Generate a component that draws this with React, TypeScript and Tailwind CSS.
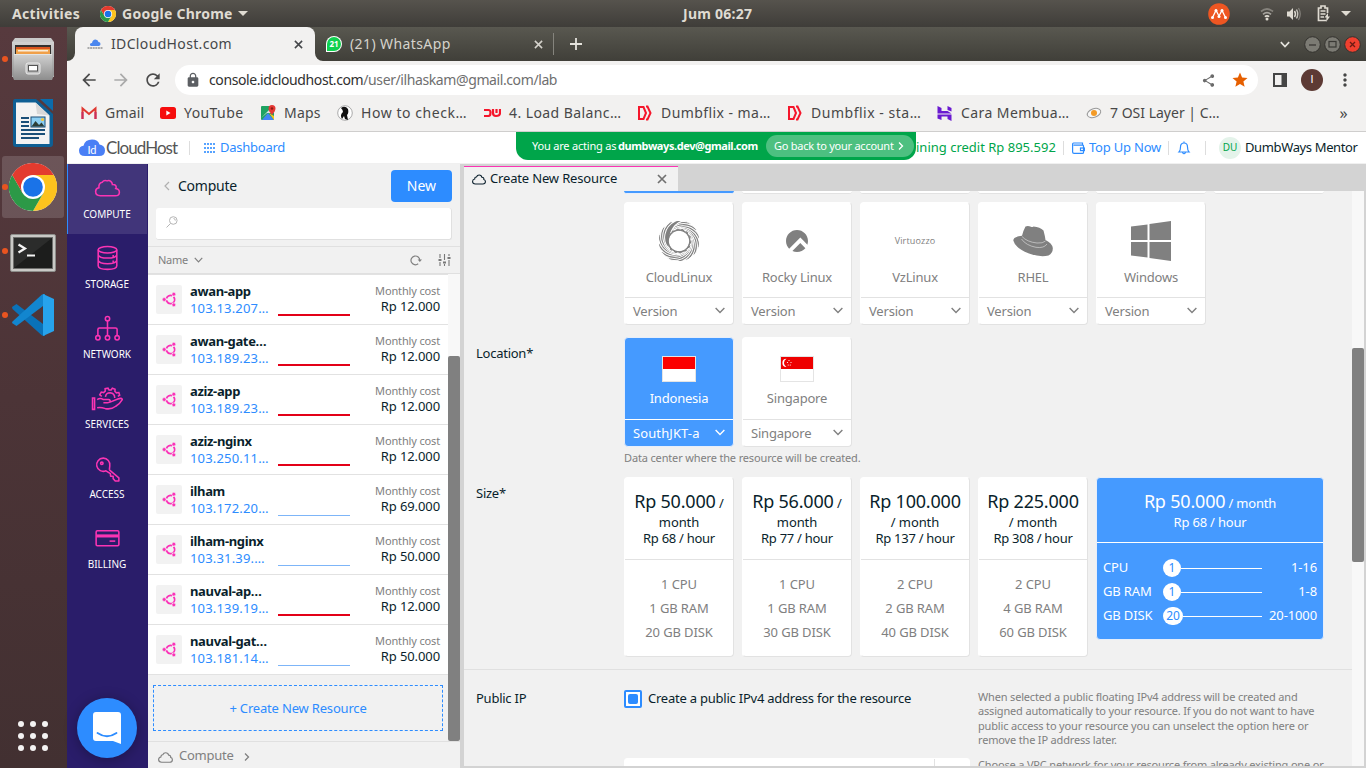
import React from "react";
import { SiRockylinux } from "react-icons/si";
import {
  MdArrowBack,
  MdArrowForward,
  MdRefresh,
  MdLock,
  MdShare,
  MdStar,
  MdMoreVert,
} from "react-icons/md";

function ChromeLogo({ size }: { size: number }) {
  return (
    <svg width={size} height={size} viewBox="0 0 48 48" className="shrink-0">
      <circle cx="24" cy="24" r="24" fill="#fff" />
      <path d="M24 24 L3.2 12 A24 24 0 0 1 44.8 12 Z" fill="#e33b2e" />
      <path d="M24 12 H44.8 A24 24 0 0 1 24 48 L34.4 30 Z" fill="#fcc31e" />
      <path d="M3.2 12 A24 24 0 0 0 24 48 L34.4 30 H24 L13.6 30 Z" fill="#2c9947" />
      <path d="M3.2 12 L13.6 30 L24 24 V12 Z" fill="#e33b2e" />
      <path d="M3.2 12 L13.6 30 L10 24 Z" fill="#2c9947" />
      <circle cx="24" cy="24" r="12" fill="#fff" />
      <circle cx="24" cy="24" r="9.8" fill="#1a73e8" />
    </svg>
  );
}

const cloudPath =
  "M6 19.5 C2.8 19.5 1 17.5 1 15.2 C1 12.8 2.8 11.3 4.8 11 C4.6 8.5 6 7 7.8 7.3 C8.8 5 10.6 4 12.400 4 C15 4 16.9 5.6 17.3 7.9 C20 7.8 21.2 9.800 20.6 11.6 C22.4 12 23.5 13.4 23.5 15.3 C23.5 17.6 21.8 19.5 19 19.5 Z";

function Cloud({ className }: { className: string }) {
  return (
    <svg viewBox="0 3 24.5 17.5" fill="none" stroke="currentColor" strokeWidth="1.9" strokeLinejoin="round" className={className}>
      <path d={cloudPath} />
    </svg>
  );
}

function Chevron({ className }: { className: string }) {
  return (
    <svg viewBox="0 0 12 8" fill="none" stroke="currentColor" strokeWidth="1.6" className={className}>
      <path d="M1 1.2 L6 6.4 L11 1.2" />
    </svg>
  );
}

function FilesIcon() {
  return (
    <svg width="42" height="44" viewBox="0 0 42 44">
      <defs>
        <linearGradient id="cab" x1="0" y1="0" x2="0" y2="1">
          <stop offset="0" stopColor="#d2d2d2" />
          <stop offset="1" stopColor="#8d8d8d" />
        </linearGradient>
      </defs>
      <path d="M3 1 H39 L42 5 V40 H0 V5 Z" fill="#c9c9c9" />
      <path d="M0 5 H42 V38 L40 43 H2 L0 38 Z" fill="url(#cab)" />
      <rect x="3" y="8" width="36" height="11" fill="#33302e" />
      <rect x="4" y="10" width="34" height="4" fill="#d9541e" />
      <rect x="4" y="12" width="34" height="6" rx="1" fill="#f0a04a" />
      <rect x="6" y="13" width="30" height="1.5" fill="#f9ecd9" />
      <rect x="2" y="17" width="38" height="26" fill="url(#cab)" />
      <rect x="2" y="17" width="38" height="1" fill="#e4e4e4" />
      <rect x="14" y="26" width="14" height="11" rx="2" fill="#bdbdbd" stroke="#ececec" />
      <rect x="16.500" y="28.500" width="9" height="5.500" fill="#fff" stroke="#555" />
    </svg>
  );
}

function WriterIcon() {
  return (
    <svg width="42" height="48" viewBox="0 0 42 48">
      <path d="M3 0 H24 L41 15 V45 Q41 48 38 48 H4 Q1 48 1 45 V3 Q1 0 3 0 Z" fill="#0e5f94" />
      <path d="M28 0 H41 V12 Z" fill="#0b6cab" />
      <path d="M4 3.500 H23.500 L37.500 16.500 V45 H4 Z" fill="#f3f3f3" />
      <path d="M23.500 3.500 L37.500 16.500 L25 15 Z" fill="#d8d8d8" />
      <g stroke="#1a4f78" strokeWidth="1.8">
        <path d="M9 19 H17 M9 23 H17 M9 27 H17 M9 31 H33 M9 35 H33 M9 39 H27" />
      </g>
      <rect x="19" y="18" width="14" height="10" fill="#8ccff3" stroke="#1a4f78" />
      <path d="M19.500 27.500 L23.500 22 L27 26 L29.500 23.500 L32.500 27.500 Z" fill="#2d3f38" />
      <circle cx="30.500" cy="20.500" r="1.600" fill="#f3c53b" />
    </svg>
  );
}

function TerminalIcon() {
  return (
    <svg width="46" height="38" viewBox="0 0 46 38" className="mt-1">
      <rect x="0.500" y="0.500" width="45" height="37" rx="1.500" fill="#c9c9c6" stroke="#8d8d8a" />
      <rect x="3.500" y="3.500" width="39" height="31" fill="#2b2c2b" stroke="#6e6e6c" />
      <path d="M4 34 L42 4 V34 Z" fill="#1c1d1c" />
      <path d="M8.500 10.500 L15 14.500 L8.500 18.500" fill="none" stroke="#f4f4f4" strokeWidth="2.200" />
      <path d="M17 21.500 H25" stroke="#f4f4f4" strokeWidth="2" />
    </svg>
  );
}

function CodeIcon() {
  return (
    <svg width="42" height="42" viewBox="0 0 42 42">
      <path d="M0 13 L4.500 10 L33 31.500 V42 L30 41.500 L0.500 15 Z" fill="#0a72b9" />
      <path d="M0.500 27.500 L30 0.500 L33 0 V10.500 L4.500 32 L0 29 Z" fill="#1286cf" />
      <path d="M31 0 L42 5 V37 L31 42 Z" fill="#27a3ec" />
    </svg>
  );
}

function DockSlot({ children, dot, active }: { children?: React.ReactNode; dot?: boolean; active?: boolean }) {
  return (
    <div className="relative flex h-16 w-full items-center justify-center pr-[2px]">
      {active && <div className="absolute left-[2px] top-[1px] h-[62px] w-[62px] rounded-[3px] bg-white/15" />}
      {dot && <div className="absolute left-[2px] top-[29px] h-[6px] w-[6px] rounded-full bg-[#e95420]" />}
      <div className="relative">{children}</div>
    </div>
  );
}

function Dock() {
  return (
    <div className="flex w-[67px] shrink-0 flex-col bg-gradient-to-b from-[#573a3e] via-[#4c3437] to-[#423031]">
      <DockSlot dot><FilesIcon /></DockSlot>
      <DockSlot><WriterIcon /></DockSlot>
      <DockSlot dot active><ChromeLogo size={48} /></DockSlot>
      <DockSlot dot><TerminalIcon /></DockSlot>
      <DockSlot dot><CodeIcon /></DockSlot>
      <div className="mt-auto mb-[17px] ml-[18px] grid w-[30px] grid-cols-3 gap-[6px]">
        {Array.from({ length: 9 }).map((_, i) => (
          <span key={i} className="h-[6px] w-[6px] rounded-full bg-[#f4f2f2]" />
        ))}
      </div>
    </div>
  );
}

function TopBar() {
  return (
    <div className="flex h-[27px] items-center bg-gradient-to-b from-[#56534d] to-[#3f3d39] text-sm font-bold tracking-[0.250px] text-[#dfdbd2]">
      <span className="ml-3 w-[88px] tracking-[0.300px]">Activities</span>
      <ChromeLogo size={16} />
      <span className="ml-[6px] w-[114px] whitespace-nowrap">Google Chrome</span>
      <svg width="10" height="5" viewBox="0 0 10 5" className="ml-[2px]"><path d="M0 0 H10 L5 5 Z" fill="#dfdbd2" /></svg>
      <span className="ml-[435px] whitespace-nowrap">Jum 06:27</span>
      <div className="ml-auto flex items-center">
        <svg width="22" height="22" viewBox="0 0 22 22">
          <circle cx="11" cy="11" r="10.800" fill="#ee5622" />
          <path d="M4.500 14.500 L8 7.500 L11 13 L14 7.500 L17.500 14.500" fill="none" stroke="#fff" strokeWidth="1.300" />
          <g fill="#fff"><circle cx="4.500" cy="14.500" r="1.500" /><circle cx="8" cy="7.500" r="1.500" /><circle cx="11" cy="13.500" r="1.500" /><circle cx="14" cy="7.500" r="1.500" /><circle cx="17.500" cy="14.500" r="1.500" /></g>
        </svg>
        <svg width="14" height="14" viewBox="0 0 14 14" className="ml-[30px]" fill="none" strokeWidth="1.700">
          <path d="M1 4.500 Q7 -0.500 13 4.500" stroke="#85827c" />
          <path d="M3 7.300 Q7 4 11 7.300" stroke="#a7a49e" />
          <path d="M4.800 9.600 Q7 8 9.200 9.600" stroke="#dfdbd2" />
          <circle cx="7" cy="12" r="1.500" fill="#dfdbd2" />
        </svg>
        <svg width="16" height="14" viewBox="0 0 16 14" className="ml-[12px]">
          <path d="M1 4.500 H3.500 L7 1 V13 L3.500 9.500 H1 Z" fill="#dfdbd2" />
          <path d="M8.500 4 Q10.500 7 8.500 10" fill="none" stroke="#dfdbd2" strokeWidth="1.400" />
          <path d="M10.500 2.500 Q13 7 10.500 11.500" fill="none" stroke="#c7c4bc" strokeWidth="1.400" />
          <path d="M12.500 1 Q16 7 12.500 13" fill="none" stroke="#85827c" strokeWidth="1.200" />
        </svg>
        <svg width="14" height="17" viewBox="0 0 14 17" className="ml-[15px]" fill="none" stroke="#dfdbd2">
          <path d="M9 15.500 H1.500 V3 H4 V1 H8 V3 H10.500 V8" strokeWidth="1.700" />
          <path d="M3.500 6 H8.500 M3.500 9 H8.500 M3.500 12 H7" strokeWidth="1.500" />
          <path d="M11 8 L7.500 12.500 H9.500 L9 17 L13 11.500 H11 Z" fill="#dfdbd2" stroke="none" />
        </svg>
        <svg width="10" height="5" viewBox="0 0 10 5" className="ml-[10px] mr-[15px]"><path d="M0 0 H10 L5 5 Z" fill="#dfdbd2" /></svg>
      </div>
    </div>
  );
}

function Cross({ className }: { className: string }) {
  return (
    <svg viewBox="0 0 10 10" fill="none" stroke="currentColor" strokeWidth="1.700" className={className}>
      <path d="M1 1 L9 9 M9 1 L1 9" />
    </svg>
  );
}

function WinButton({ kind }: { kind: "min" | "max" | "close" }) {
  return (
    <svg width="17" height="17" viewBox="0 0 17 17">
      <circle cx="8.500" cy="8.500" r="7.800" fill={kind === "close" ? "#f0402f" : "#7c7b74"} stroke="#34332f" />
      {kind === "min" && <path d="M5 9 H12" stroke="#3a3935" strokeWidth="1.300" />}
      {kind === "max" && <rect x="5" y="5.500" width="7" height="5.500" fill="none" stroke="#3a3935" strokeWidth="1.200" />}
      {kind === "close" && <path d="M6 6 L11 11 M11 6 L6 11" stroke="#6b1a12" strokeWidth="1.300" />}
    </svg>
  );
}

function TabStrip() {
  return (
    <div className="flex h-[34px] items-stretch bg-gradient-to-b from-[#595850] to-[#403f39]">
      <div className="flex w-2 items-end">
        <svg width="8" height="8" viewBox="0 0 8 8"><path d="M8 0 V8 H0 A8 8 0 0 0 8 0 Z" fill="#f2f1f0" /></svg>
      </div>
      <div className="flex w-[240px] items-center rounded-t-lg bg-[#f2f1f0] text-sm text-[#45474a]">
        <svg width="16" height="12" viewBox="0 0 16 12" className="ml-3">
          <path d="M4 8 Q2.500 7.500 3 6 Q3.500 5 5 5 Q5.500 1.500 8.500 1.500 Q11 1.500 11.500 4 Q13.500 4 13.500 6 Q13.500 7.500 12 8 Z" fill="#4a86ee" />
          <path d="M0.500 10 H15.500" stroke="#aaa" strokeWidth="1.800" strokeDasharray="2 0.600" />
        </svg>
        <span className="ml-2 whitespace-nowrap tracking-[0.350px]">IDCloudHost.com</span>
        <Cross className="ml-auto mr-3 h-[9px] w-[9px]" />
      </div>
      <div className="flex w-[239px] items-center border-r border-[#85847d] text-sm text-[#d5d3cc] [border-image:linear-gradient(transparent_20%,#85847d_20%,#85847d_80%,transparent_80%)_1]">
        <div className="flex w-2 items-end self-stretch">
          <svg width="8" height="8" viewBox="0 0 8 8"><path d="M0 0 V8 H8 A8 8 0 0 1 0 0 Z" fill="#f2f1f0" /></svg>
        </div>
        <div className="ml-[3px] flex h-4 w-4 items-center justify-center rounded-full rounded-bl-none bg-white">
          <div className="flex h-[14px] w-[14px] items-center justify-center rounded-full rounded-bl-[3px] bg-[#10d04f] text-[8px] font-bold leading-none text-white">21</div>
        </div>
        <span className="ml-2 whitespace-nowrap tracking-[0.400px]">(21) WhatsApp</span>
        <Cross className="ml-auto mr-[10px] h-[9px] w-[9px]" />
      </div>
      <svg width="12" height="12" viewBox="0 0 12 12" className="ml-4 self-center"><path d="M6 0 V12 M0 6 H12" stroke="#e4e2dc" strokeWidth="1.800" /></svg>
      <div className="ml-auto flex items-center gap-[3px] pr-[5px]">
        <Chevron className="mr-[11px] h-[7px] w-[10px] stroke-2 text-[#e4e2dc]" />
        <WinButton kind="min" />
        <WinButton kind="max" />
        <WinButton kind="close" />
      </div>
    </div>
  );
}

function Toolbar() {
  return (
    <div className="flex h-[37px] items-center bg-[#f2f1f0] pt-[1px]">
      <MdArrowBack className="ml-[12px] h-5 w-5 text-[#4b4b4b]" />
      <MdArrowForward className="ml-3 h-5 w-5 text-[#aaa]" />
      <MdRefresh className="ml-3 h-5 w-5 text-[#4b4b4b]" />
      <div className="ml-3 flex h-[30px] w-[1083px] items-center rounded-full bg-white text-sm text-[#6f6f6f]">
        <MdLock className="ml-[10px] h-4 w-4 text-[#5c5f63]" />
        <span className="ml-2 whitespace-nowrap tracking-[-0.400px]">
          <span className="text-[#303030]">console.idcloudhost.com</span>/user/ilhaskam@gmail.com/lab
        </span>
        <MdShare className="ml-auto h-[15px] w-[15px] text-[#6a6a6a]" />
        <MdStar className="ml-[15px] mr-[9px] h-[18px] w-[18px] text-[#e65f00]" />
      </div>
      <svg width="14" height="14" viewBox="0 0 14 14" className="ml-[15px]"><path d="M1 1 H13 V13 H1 Z" fill="none" stroke="#454545" strokeWidth="2" /><path d="M8.500 1 H13 V13 H8.500 Z" fill="#454545" /></svg>
      <div className="ml-[14px] flex h-[22px] w-[22px] items-center justify-center rounded-full bg-[#5d3a34] font-[Roboto] text-[11px] text-white">I</div>
      <MdMoreVert className="ml-[12px] h-5 w-5 text-[#454545]" />
    </div>
  );
}

function FlixIcon() {
  return (
    <svg width="14" height="16" viewBox="0 0 14 16" fill="none" stroke="#f5162b" strokeWidth="2" className="shrink-0">
      <path d="M1 2 H5.500 L8 8 L5.500 14 H1 Z" /><path d="M8 1.500 H9.500 L12.500 8 L9.500 14.500 H8" />
    </svg>
  );
}

function Bookmarks() {
  const cls = "whitespace-nowrap";
  return (
    <div className="flex h-[34px] items-center border-b border-[#cfcecd] bg-[#f2f1f0] pb-[3px] text-sm tracking-[0.420px] text-[#484848]">
      <div className="ml-[14px] flex w-[79px] items-center gap-2">
        <svg width="16" height="14" viewBox="0 0 16 14" className="shrink-0" fill="none" strokeWidth="2"><path d="M1.500 13 V2.500 L8 8 L14.500 2.500 V13" stroke="#e03a32" /><path d="M1.500 13 V6" stroke="#c92e5c" /><path d="M14.500 13 V6" stroke="#c92e5c" /></svg>
        <span className="whitespace-nowrap tracking-[0.200px]">Gmail</span>
      </div>
      <div className="flex w-[101px] items-center gap-2">
        <svg width="16" height="12" viewBox="0 0 16 12" className="shrink-0"><rect width="16" height="12" rx="2.500" fill="#f60d0d" /><path d="M6.300 3.500 L10.500 6 L6.300 8.500 Z" fill="#fff" /></svg>
        <span className={cls}>YouTube</span>
      </div>
      <div className="flex w-[76px] items-center gap-2">
        <svg width="15" height="16" viewBox="0 0 15 16" className="shrink-0"><rect y="1" width="13" height="14" rx="1" fill="#1ea362" /><path d="M1 15 L7 8 L13 15 Z" fill="#4285f4" /><path d="M0 13 L9 4 L13 8 L6 8 Z" fill="#dde0e3" /><path d="M13 15 V11 L8 8" fill="#f5c518" /><path d="M11 0 A3.500 3.500 0 0 1 14.500 3.500 Q14.500 6 11 10 Q7.500 6 7.500 3.500 A3.500 3.500 0 0 1 11 0 Z" fill="#e53935" /><circle cx="11" cy="3.500" r="1.200" fill="#8d1b16" /></svg>
        <span className="whitespace-nowrap tracking-[0.200px]">Maps</span>
      </div>
      <div className="flex w-[147px] items-center gap-2">
        <svg width="16" height="16" viewBox="0 0 16 16" className="shrink-0"><circle cx="8" cy="8" r="7.300" fill="#fff" stroke="#aaa" /><path d="M4 3 Q8 0 11 4 Q12 8 10 10 L11 15 L8 14 L7 11 L5 14 Q2.500 10 6 7 Q6 5 4 3 Z" fill="#111" /></svg>
        <span className="whitespace-nowrap tracking-[0.550px]">How to check…</span>
      </div>
      <div className="flex w-[154px] items-center gap-2">
        <svg width="17" height="10" viewBox="0 0 17 10" className="shrink-0" fill="none" stroke="#f5162b" strokeWidth="2.200"><path d="M0 2 H4.500 Q6.500 2 6.500 4.500 Q6.500 8 4.500 8 H0 M9 1 V5 Q9 8 12 8 Q16 8 16 5 V1 M12.500 1 V5" /></svg>
        <span className={cls}>4. Load Balanc…</span>
      </div>
      <div className="flex w-[150px] items-center gap-[9px]"><FlixIcon /><span className={cls}>Dumbflix - ma…</span></div>
      <div className="flex w-[149px] items-center gap-[9px]"><FlixIcon /><span className="whitespace-nowrap tracking-[0.520px]">Dumbflix - sta…</span></div>
      <div className="flex w-[149px] items-center gap-[9px]">
        <svg width="15" height="15" viewBox="0 0 14 15" className="shrink-0" fill="#6a1ad0"><path d="M0 0 L4 2 V5 H10 L14 7.500 H0 Z M10 0 L14 2 V5.500 L10 4 Z M0 8.500 H14 V15 L10 13 V10.500 H4 L4 14 L0 12.500 Z" /></svg>
        <span className={cls}>Cara Membua…</span>
      </div>
      <div className="flex items-center gap-2">
        <svg width="16" height="12" viewBox="0 0 15 12" className="shrink-0"><ellipse cx="7.500" cy="6" rx="7" ry="4.300" transform="rotate(-20 7.500 6)" fill="#f7f7f7" stroke="#999" /><circle cx="7.500" cy="6" r="3" fill="#f39a26" /></svg>
        <span className="whitespace-nowrap tracking-[0px]">7 OSI Layer | C…</span>
      </div>
      <span className="ml-auto mr-[18px] text-base leading-none">»</span>
    </div>
  );
}

function SiteHeader() {
  return (
    <div className="relative flex h-8 items-center border-b border-[#f0f0f0] bg-white text-[13px]">
      <svg width="26" height="18" viewBox="0 0 26 18" className="ml-3 shrink-0">
        <path d="M6 17 Q0 17 0 11.500 Q0 7.500 4.500 6.800 Q6 0.500 13 0.500 Q19 0.500 20.500 5.500 Q26 6.500 26 11.500 Q26 17 20 17 Z" fill="#4a7ff5" />
        <text x="13" y="14.500" textAnchor="middle" fontSize="11" fill="#fff" fontFamily="Lato, sans-serif">Id</text>
      </svg>
      <span className="ml-[1px] w-[73px] whitespace-nowrap font-[Lato] text-[17px] tracking-[-0.950px] text-[#555]">CloudHost</span>
      <div className="ml-[10px] h-[14px] w-px bg-[#ddd]" />
      <div className="ml-[14px] grid grid-cols-4 gap-x-[1px] gap-y-[2px]">
        {Array.from({ length: 12 }).map((_, i) => <span key={i} className="h-[2px] w-[2px] bg-[#2d8cff]/80" />)}
      </div>
      <span className="ml-[5px] tracking-[-0.250px] text-[#2d8cff]">Dashboard</span>
      <div className="ml-auto flex items-center whitespace-nowrap">
        <span className="w-[147px] text-[#00a54a]">ining credit Rp 895.592</span>
        <div className="h-[14px] w-px bg-[#ddd]" />
        <svg width="13" height="12" viewBox="0 0 13 12" className="ml-[8px]" fill="none" stroke="#2d8cff" strokeWidth="1.200"><path d="M10.500 3 V1 H1.500 Q0.600 1 0.600 2 V10 Q0.600 11.400 2 11.400 H10.500 Q11.500 11.400 11.500 10.500 V4 Q11.500 3.200 10.500 3.200 H1.500" /><rect x="8.500" y="6" width="4" height="2.600" /></svg>
        <span className="ml-[4px] w-[79px] tracking-[-0.200px] text-[#2d8cff]">Top Up Now</span>
        <div className="h-[14px] w-px bg-[#ddd]" />
        <svg width="14" height="14" viewBox="0 0 12 14" className="ml-[8px]" fill="none" stroke="#2d8cff" strokeWidth="1.200"><path d="M1 11 Q2.500 9.500 2.500 6 Q2.500 2 6 2 Q9.500 2 9.500 6 Q9.500 9.500 11 11 Z M6 2 V0.500 M4.500 11.500 Q6 14 7.500 11.500" /></svg>
        <div className="ml-[14px] h-[14px] w-px bg-[#ddd]" />
        <div className="ml-[13px] flex h-[22px] w-[22px] items-center justify-center rounded-full bg-[#e4f3ea] text-[10px] text-[#00a54a]">DU</div>
        <span className="ml-[4px] mr-[8px] w-[113px] tracking-[-0.370px] text-[#0a1f2c]">DumbWays Mentor</span>
      </div>
      <div className="absolute left-[449px] top-0 flex h-7 w-[400px] items-center whitespace-nowrap rounded-b-xl bg-[#00a54a] text-[11px] text-white">
        <span className="ml-4 w-[86px] tracking-[-0.200px]">You are acting as</span>
        <span className="w-[140px] font-bold tracking-[-0.420px]">dumbways.dev@gmail.com</span>
        <span className="ml-[8px] flex h-[22px] w-[148px] items-center rounded-full bg-white/30 pl-[8px] text-[11px] tracking-[-0.250px]">
          Go back to your account
          <svg width="6" height="8" viewBox="0 0 6 8" className="ml-auto mr-[10px] shrink-0" fill="none" stroke="#fff" strokeWidth="1.300"><path d="M1 0.500 L4.500 4 L1 7.500" /></svg>
        </span>
      </div>
    </div>
  );
}

const navIcons: Record<string, React.ReactNode> = {
  COMPUTE: <path d="M8 20 C5 20 3.500 18 3.500 16 C3.500 13.800 5 12.600 6.700 12.300 C6.500 9.500 7 7.500 9.800 7 C10.800 5.500 12.600 4.800 14.600 5.600 C17.500 4.500 19.500 6.700 19.800 9.200 C23 9 24.200 11 23 13 C25.300 13.500 26.500 15 26.500 16.500 C26.500 18.500 25 20 22.500 20 Z" />,
  STORAGE: <g><ellipse cx="15" cy="4.500" rx="9" ry="3.200" /><path d="M6 4.500 V20 Q6 23.500 15 23.500 Q24 23.500 24 20 V4.500 M6 9.500 Q7 12.500 15 12.500 Q23 12.500 24 9.500 M6 15 Q7 18 15 18 Q23 18 24 15 M20.500 9.500 V11.500 M20.500 15 V17" /></g>,
  NETWORK: <g><circle cx="15" cy="3.500" r="2.100" /><circle cx="5.700" cy="22" r="2.100" /><circle cx="15" cy="22" r="2.100" /><circle cx="24.300" cy="22" r="2.100" /><path d="M15 5.600 V20 M5.700 20 V14 Q5.700 12.500 7.200 12.500 H22.800 Q24.300 12.500 24.300 14 V20" /></g>,
  SERVICES: <g><path d="M0.500 12.500 H2.500 V23.500 H0.500 Z M5 14 Q8 12 11 14 H16 Q18 14.200 17.500 16 Q17 17 15 17 H11 M17.500 16.500 L25 13.500 Q29 12 29.300 14 Q27 18 23 20.500 Q19 23.800 13 22.800 Q8 21 5 22" /><path d="M9.500 11 L7.500 9.500 L9 6.800 L11.200 7.300 L12.800 5.800 L12.700 3.500 L15.500 3 L16.500 4.800 L18.500 4.800 L19.700 3 L22.300 4 L22.200 6.200 L23.700 7.500 L26 7.200 L26.800 9.800 L25 11 M13 11.500 Q13.500 7.500 17.500 7.500 Q22 8 22 12.500" /></g>,
  ACCESS: <g><path d="M16.800 14.300 L26 22 V25 H22.500 L20.500 22.800 V20.500 H18 L17.800 18 L13.500 15.200 A6.400 6.400 0 1 1 17.200 10.500 Q17 12.500 16.800 14.300" strokeLinejoin="round" /><circle cx="9.500" cy="8" r="1.200" /></g>,
  BILLING: <g><rect x="4" y="5.500" width="22" height="14.500" rx="1.200" /><path d="M4 10.500 H26" strokeWidth="3" /><path d="M17 15.500 H22.500" /></g>,
};

function NavItem({ label, active }: { label: string; active?: boolean }) {
  return (
    <div className={active ? "flex h-[70px] w-[80px] flex-col items-center border-l border-[#2d8cff] bg-[#41357a] pr-px" : "flex h-[70px] w-[80px] flex-col items-center border-l border-[#2a1d6a] pr-px"}>
      <svg width="31" height="26" viewBox="0 0 30 25" className="mt-[11px] overflow-visible" fill="none" stroke="#fb34b4" strokeWidth="1.500">{navIcons[label]}</svg>
      <span className="mt-[6px] text-[10px] leading-[14px] text-white">{label}</span>
    </div>
  );
}

function Nav() {
  return (
    <div className="relative w-[81px] shrink-0 bg-[#2a1d6a]">
      {["COMPUTE", "STORAGE", "NETWORK", "SERVICES", "ACCESS", "BILLING"].map((l, i) => (
        <NavItem key={l} label={l} active={i === 0} />
      ))}
      <div className="absolute bottom-[10px] left-[10px] flex h-[60px] w-[60px] items-center justify-center rounded-full bg-[#2d8cff] shadow-[0_2px_14px_rgba(0,0,0,0.3)]">
        <svg width="28" height="32" viewBox="0 0 28 32">
          <path d="M3 0 H25 Q28 0 28 3 V32 L20 29 H3 Q0 29 0 26 V3 Q0 0 3 0 Z" fill="#fff" />
          <path d="M4.500 21 Q14 27.500 23.500 21" fill="none" stroke="#2d8cff" strokeWidth="1.800" strokeLinecap="round" />
        </svg>
      </div>
    </div>
  );
}

function UbuntuMark() {
  return (
    <svg width="15" height="15" viewBox="0 0 15 15" fill="none" stroke="#fb30b8">
      <circle cx="8.500" cy="7.500" r="4.100" strokeWidth="1.800" strokeDasharray="7.080 1.500" strokeDashoffset="-0.750" transform="rotate(60 8.500 7.500)" />
      <g fill="#fb30b8" stroke="#f2f2f2" strokeWidth="0.600"><circle cx="2.200" cy="7.500" r="1.900" /><circle cx="11.800" cy="2.200" r="1.900" /><circle cx="11.800" cy="12.800" r="1.900" /></g>
    </svg>
  );
}

const resources = [
  { name: "awan-app", ip: "103.13.207…", cost: "Rp 12.000", on: false },
  { name: "awan-gate…", ip: "103.189.23…", cost: "Rp 12.000", on: false },
  { name: "aziz-app", ip: "103.189.23…", cost: "Rp 12.000", on: false },
  { name: "aziz-nginx", ip: "103.250.11…", cost: "Rp 12.000", on: false },
  { name: "ilham", ip: "103.172.20…", cost: "Rp 69.000", on: true },
  { name: "ilham-nginx", ip: "103.31.39.…", cost: "Rp 50.000", on: true },
  { name: "nauval-ap…", ip: "103.139.19…", cost: "Rp 12.000", on: false },
  { name: "nauval-gat…", ip: "103.181.14…", cost: "Rp 50.000", on: true },
];

function ResourceRow({ r }: { r: (typeof resources)[number] }) {
  return (
    <div className="flex h-[50px] border-b border-[#e2e2e2] bg-white">
      <div className="ml-2 mt-[10px] flex h-[29px] w-[26px] items-center justify-center rounded-[2px] bg-[#f2f2f2]"><UbuntuMark /></div>
      <div className="ml-2 mt-[8px] w-[80px] whitespace-nowrap text-[13px] leading-[17px]">
        <div className="font-bold tracking-[-0.350px] text-[#0a1f2c]">{r.name}</div>
        <div className="tracking-[0.170px] text-[#2d8cff]">{r.ip}</div>
      </div>
      <div className="ml-[8px] flex h-[41px] w-[72px] items-end">
        {r.on ? <div className="h-px w-full bg-[#7db5f8]" /> : <div className="h-[2px] w-full bg-[#e30018]" />}
      </div>
      <div className="ml-auto mr-[8px] mt-[8px] text-right">
        <div className="text-[11px] leading-[15px] tracking-[-0.150px] text-[#808080]">Monthly cost</div>
        <div className="text-[13px] leading-[16px] tracking-[-0.100px] text-[#0a1f2c]">{r.cost}</div>
      </div>
    </div>
  );
}

function ResourcePanel() {
  return (
    <div className="flex w-[312px] shrink-0 flex-col bg-[#f1f1f1]">
      <div className="flex h-[44px] items-center">
        <svg width="6" height="10" viewBox="0 0 6 10" className="ml-4" fill="none" stroke="#b0b0b0" strokeWidth="1.200"><path d="M5 1 L1 5 L5 9" /></svg>
        <span className="ml-2 text-sm tracking-[-0.250px] text-[#0a1f2c]">Compute</span>
        <div className="ml-auto mr-[8px] flex h-8 w-[61px] items-center justify-center rounded-[4px] bg-[#2d8cff] pb-[1px] text-sm text-white">New</div>
      </div>
      <div className="mx-2 flex h-8 w-[296px] shrink-0 items-center rounded-[3px] border-b border-r border-[#e0e0e0] bg-white">
        <svg width="12" height="12" viewBox="0 0 12 12" className="ml-[10px] -mt-1" fill="none" stroke="#b5b5b5"><circle cx="7.300" cy="4.500" r="3.800" /><path d="M4.500 7.500 L0.500 11.500 M7.500 2.500 Q9.500 2.700 9.300 4.600" /></svg>
      </div>
      <div className="mt-[6px] flex h-[28px] shrink-0 items-center border-y border-[#e0e0e0] text-[11px] text-[#808080]">
        <span className="ml-[10px] tracking-[-0.300px]">Name</span>
        <Chevron className="ml-[6px] h-[6px] w-[9px]" />
        <svg width="12" height="11" viewBox="0 0 12 11" className="ml-auto" fill="none" stroke="#808080" strokeWidth="1.200"><path d="M9.800 5.500 A4.400 4.400 0 1 0 8.200 8.800" /><path d="M7.600 4.600 H12 L9.800 7 Z" fill="#808080" stroke="none" /></svg>
        <svg width="13" height="12" viewBox="0 0 13 12" className="ml-[16px] mr-[9px]" fill="none" stroke="#777" strokeWidth="1.100"><path d="M2 0 V4 M2 8 V12 M6.500 0 V6 M6.500 10 V12 M11 0 V2 M11 6 V12" /><path d="M0.500 6 H3.500 M5 8.500 H8 M9.500 4 H12.500" strokeWidth="2" /></svg>
      </div>
      <div className="flex h-[467px] shrink-0">
        <div className="w-[300px] border-t border-[#e2e2e2]">
          {resources.map((r) => <ResourceRow key={r.name} r={r} />)}
          <div className="ml-[5px] mt-[10px] flex h-[46px] w-[290px] items-center justify-center border border-dashed border-[#2d8cff] pt-[2px] text-[13px] tracking-[-0.180px] text-[#2d8cff]">+ Create New Resource</div>
        </div>
        <div className="flex w-3 flex-col justify-end bg-[#f8f8f8]"><div className="h-[385px] rounded-[2px] bg-[#808080]" /></div>
      </div>
      <div className="flex flex-1 items-center border-t border-[#e0e0e0] pt-[1px] text-[13px] text-[#808080]">
        <Cloud className="ml-[10px] mt-[3px] h-[11px] w-[15px]" />
        <span className="ml-[6px] tracking-[-0.250px]">Compute</span>
        <svg width="6" height="8" viewBox="0 0 6 8" className="ml-[10px] mt-[2px]" fill="none" stroke="#808080" strokeWidth="1.300"><path d="M1 0.500 L4.500 4 L1 7.500" /></svg>
      </div>
    </div>
  );
}

function CloudLinuxMark() {
  return (
    <svg width="40" height="40" viewBox="-20 -20 40 40" fill="#808080">
      {Array.from({ length: 14 }).map((_, i) => (
        <path key={i} d="M-12 3 C-16 -7 -8 -19.500 5 -19.500 C9 -19.300 11 -18 12 -16.500 C2 -18 -8 -11 -12 3 Z" transform={`rotate(${i * 25.714})`} stroke="#fff" strokeWidth="1" />
      ))}
      <circle r="10.500" fill="#fff" />
      {Array.from({ length: 14 }).map((_, i) => (
        <path key={i} d="M-9.500 6 C-11 2 -10.500 -2 -8.500 -6 L-10.800 -3 C-12 0 -11.500 4 -9.500 6 Z" transform={`rotate(${i * 25.714})`} />
      ))}
    </svg>
  );
}

function HatMark() {
  return (
    <svg width="40" height="40" viewBox="0 0 40 40">
      <path d="M12.500 5.500 Q15 4.500 18 5.800 Q19 6.500 20.500 5.500 Q27 6 30.500 9.500 Q32 15 32.500 19 Q39 22 39.800 27 Q40 32 35.500 34.500 Q27 36.500 16 32.500 Q2 27 0.300 19.500 Q0.300 15.500 9 14.800 Q10.500 9 12.500 5.500 Z" fill="#808080" />
      <path d="M9 15.500 Q14 21 24 22 Q30 22.500 32.500 20 M8.500 18 Q13 24.500 23 26.300 Q31 27.500 34 23" fill="none" stroke="#d4d4d4" strokeWidth="0.700" />
    </svg>
  );
}

function WindowsMark() {
  return (
    <svg width="40" height="40" viewBox="0 0 40 40" fill="#808080">
      <path d="M0 5.600 L16.500 3.500 V19 H0 Z M18.500 3 L40 0 V19 H18.500 Z M0 21 H16.500 V36.500 L0 34.400 Z M18.500 21 H40 V40 L18.500 37 Z" />
    </svg>
  );
}

function Card({ icon, label, option, selected, low }: { icon: React.ReactNode; label: string; option: string; selected?: boolean; low?: boolean }) {
  const tone = selected
    ? "border border-[#e6eefb] bg-[#459aff] text-white"
    : "border border-l-white border-t-white border-b-[#e2e2e2] border-r-[#e2e2e2] bg-white text-[#808080]";
  return (
    <div className={`flex w-[110px] shrink-0 flex-col rounded-[4px] text-[13px] tracking-[-0.200px] ${tone} ${low ? "h-[110px]" : "h-[123px]"}`}>
      <div className={`flex items-center justify-center ${low ? "h-[61px] pt-[4px]" : "h-[75px]"}`}>{icon}</div>
      <div className={low ? "-mt-[10px] h-[30px] text-center leading-[18px]" : "-mt-[10px] h-[29px] text-center leading-[18px]"}>{label}</div>
      <div className={`flex flex-1 items-center border-t pl-[8px] pr-[7px] pt-[2px] ${selected ? "border-white tracking-[0.100px]" : "border-[#e2e2e2]"}`}>
        <span className="whitespace-nowrap">{option}</span>
        <Chevron className="-mt-[3px] ml-auto h-[7px] w-[12px]" />
      </div>
    </div>
  );
}

function Flag({ singapore }: { singapore?: boolean }) {
  return (
    <svg width="34" height="26" viewBox="0 0 34 26" className="-mt-[3px]">
      <rect x="0.500" y="0.500" width="33" height="25" fill="#fff" stroke="#e4e4e4" />
      <rect x="1" y="1" width="32" height="12" fill={singapore ? "#ee0000" : "#fb0000"} />
      {singapore && (
        <g fill="#fff"><path d="M6.500 2.800 A4 4 0 1 0 6.500 11 A4.600 4.600 0 0 1 6.500 2.800 Z" /><circle cx="9" cy="4.500" r="0.600" /><circle cx="11" cy="6.500" r="0.600" /><circle cx="7.500" cy="6.500" r="0.600" /><circle cx="8.200" cy="9" r="0.600" /><circle cx="10.300" cy="9" r="0.600" /></g>
      )}
    </svg>
  );
}

function SizeCard({ price, tail, hour, specs }: { price: string; tail: boolean; hour: string; specs: string[] }) {
  return (
    <div className="flex h-[180px] w-[110px] shrink-0 flex-col rounded-[4px] border border-b-[#e2e2e2] border-l-white border-r-[#e2e2e2] border-t-white bg-white text-center text-[13px]">
      <div className="h-[81px] whitespace-nowrap pt-[11px] leading-[16px] text-[#0a1f2c]">
        <div className="h-[25px] leading-[24px]">
          <span className="text-lg leading-[24px] tracking-[-0.200px]">{price}</span>{tail && " /"}
        </div>
        <div className="tracking-[-0.100px]">{tail ? "month" : "/ month"}</div>
        <div className="tracking-[-0.280px]">{hour}</div>
      </div>
      <div className="flex-1 border-t border-[#e2e2e2] pt-[12px] leading-6 tracking-[-0.120px] text-[#808080]">
        {specs.map((s) => <div key={s}>{s}</div>)}
      </div>
    </div>
  );
}

function SliderRow({ label, value, range }: { label: string; value: string; range: string }) {
  return (
    <div className="flex h-6 items-center pl-[6px] pr-[6px]">
      <span className="w-[60px] whitespace-nowrap tracking-[-0.150px]">{label}</span>
      <span className={`flex h-[18px] items-center justify-center rounded-full bg-white text-[12px] leading-none text-[#2d8cff] ${value === "20" ? "w-5" : "w-[18px]"}`}>{value}</span>
      <span className={`h-px bg-white ${value === "20" ? "w-[79px]" : "w-[81px]"}`} />
      <span className="ml-auto tracking-[-0.120px]">{range}</span>
    </div>
  );
}

function CustomSize() {
  return (
    <div className="h-[163px] w-[228px] shrink-0 rounded-[4px] border border-[#e6eefb] bg-[#459aff] text-[13px] text-white">
      <div className="h-[64px] pt-[11px] text-center leading-[16px] tracking-[-0.200px]">
        <div className="h-[25px] leading-[24px]"><span className="text-lg leading-[24px]">Rp 50.000</span> / month</div>
        <div>Rp 68 / hour</div>
      </div>
      <div className="border-t border-white pt-[13px]">
        <SliderRow label="CPU" value="1" range="1-16" />
        <SliderRow label="GB RAM" value="1" range="1-8" />
        <SliderRow label="GB DISK" value="20" range="20-1000" />
      </div>
    </div>
  );
}

function Field({ label, children, className }: { label: string; children: React.ReactNode; className: string }) {
  return (
    <div className={`flex ${className}`}>
      <div className="w-[160px] shrink-0 pl-3 pt-[7px] text-[13px] leading-[18px] tracking-[-0.250px] text-[#0a1f2c]">{label}</div>
      {children}
    </div>
  );
}

function Workspace() {
  return (
    <div className="flex min-w-0 flex-1 flex-col bg-[#d3d3d3] pb-[2px] pl-1 pr-[2px] pt-[2px]">
      <div className="flex h-[25px] w-[214px] shrink-0 items-center border-t border-[#fb34b4] bg-[#f1f1f1] text-[13px] text-[#0a1f2c]">
        <Cloud className="ml-2 h-[11px] w-[14px]" />
        <span className="ml-[4px] whitespace-nowrap tracking-[-0.160px]">Create New Resource</span>
        <Cross className="ml-auto mr-[11px] h-[10px] w-[10px] text-[#707070]" />
      </div>
      <div className="flex min-h-0 flex-1 bg-[#f1f1f1]">
        <div className="flex min-w-0 flex-1 flex-col overflow-hidden">
          <div className="ml-[160px] flex shrink-0 gap-2">
            <div className="h-[3px] w-[110px] rounded-b-[4px] border-b border-[#e6eefb] bg-[#459aff]" />
            {[1, 2, 3, 4, 5].map((i) => <div key={i} className="h-[3px] w-[110px] rounded-b-[4px] border-b border-[#e2e2e2] bg-white" />)}
          </div>
          <div className="ml-[160px] mt-[8px] flex shrink-0 gap-2">
            <Card icon={<CloudLinuxMark />} label="CloudLinux" option="Version" />
            <Card icon={<SiRockylinux className="h-[22px] w-[22px] text-[#808080]" />} label="Rocky Linux" option="Version" />
            <Card icon={<span className="font-['Open_Sans'] text-[9px] tracking-[0.150px]">Virtuozzo</span>} label="VzLinux" option="Version" />
            <Card icon={<HatMark />} label="RHEL" option="Version" />
            <Card icon={<WindowsMark />} label="Windows" option="Version" />
          </div>
          <Field label="Location*" className="mt-[12px] h-[140px] shrink-0">
            <div>
              <div className="flex gap-2">
                <Card low selected icon={<Flag />} label="Indonesia" option="SouthJKT-a" />
                <Card low icon={<Flag singapore />} label="Singapore" option="Singapore" />
              </div>
              <div className="mt-[3px] whitespace-nowrap text-[11px] leading-[15px] tracking-[-0.150px] text-[#808080]">Data center where the resource will be created.</div>
            </div>
          </Field>
          <Field label="Size*" className="h-[192px] shrink-0">
            <div className="flex items-start gap-2">
              <SizeCard price="Rp 50.000" tail hour="Rp 68 / hour" specs={["1 CPU", "1 GB RAM", "20 GB DISK"]} />
              <SizeCard price="Rp 56.000" tail hour="Rp 77 / hour" specs={["1 CPU", "1 GB RAM", "30 GB DISK"]} />
              <SizeCard price="Rp 100.000" tail={false} hour="Rp 137 / hour" specs={["2 CPU", "2 GB RAM", "40 GB DISK"]} />
              <SizeCard price="Rp 225.000" tail={false} hour="Rp 308 / hour" specs={["2 CPU", "4 GB RAM", "60 GB DISK"]} />
              <CustomSize />
            </div>
          </Field>
          <Field label="Public IP" className="shrink-0 border-t border-[#e0e0e0] pt-[12px]">
            <div className="w-[346px] shrink-0">
              <div className="mt-[8px] flex h-[18px] items-center">
                <span className="flex h-[18px] w-[18px] items-center justify-center rounded-[2px] border-2 border-[#2d8cff] bg-white"><span className="h-[10px] w-[10px] rounded-[2px] bg-[#2d8cff]" /></span>
                <span className="ml-[6px] whitespace-nowrap text-[13px] tracking-[-0.230px] text-[#0a1f2c]">Create a public IPv4 address for the resource</span>
              </div>
              <div className="mt-[50px] flex h-9 justify-end rounded-[3px] border border-white bg-white"><span className="w-[35px] border-l border-[#e2e2e2]" /></div>
            </div>
            <div className="ml-[8px] whitespace-nowrap pt-[8px] text-[11px] leading-[14.300px] tracking-[-0.170px] text-[#808080]">
              <div>When selected a public floating IPv4 address will be created and</div>
              <div>assigned automatically to your resource. If you do not want to have</div>
              <div>public access to your resource you can unselect the option here or</div>
              <div>remove the IP address later.</div>
              <div className="mt-[11px]">Choose a VPC network for your resource from already existing one or</div>
            </div>
          </Field>
        </div>
        <div className="w-3 shrink-0 bg-[#f8f8f8] pt-[157px]"><div className="h-[214px] rounded-[2px] bg-[#808080]" /></div>
      </div>
    </div>
  );
}

export default function App() {
  return (
    <div className="flex h-[768px] w-[1366px] flex-col overflow-hidden font-['Noto_Sans',sans-serif]">
      <TopBar />
      <div className="flex min-h-0 flex-1">
        <Dock />
        <div className="flex min-w-0 flex-1 flex-col">
          <TabStrip />
          <Toolbar />
          <Bookmarks />
          <SiteHeader />
          <div className="flex min-h-0 flex-1">
            <Nav />
            <ResourcePanel />
            <Workspace />
          </div>
        </div>
      </div>
    </div>
  );
}
